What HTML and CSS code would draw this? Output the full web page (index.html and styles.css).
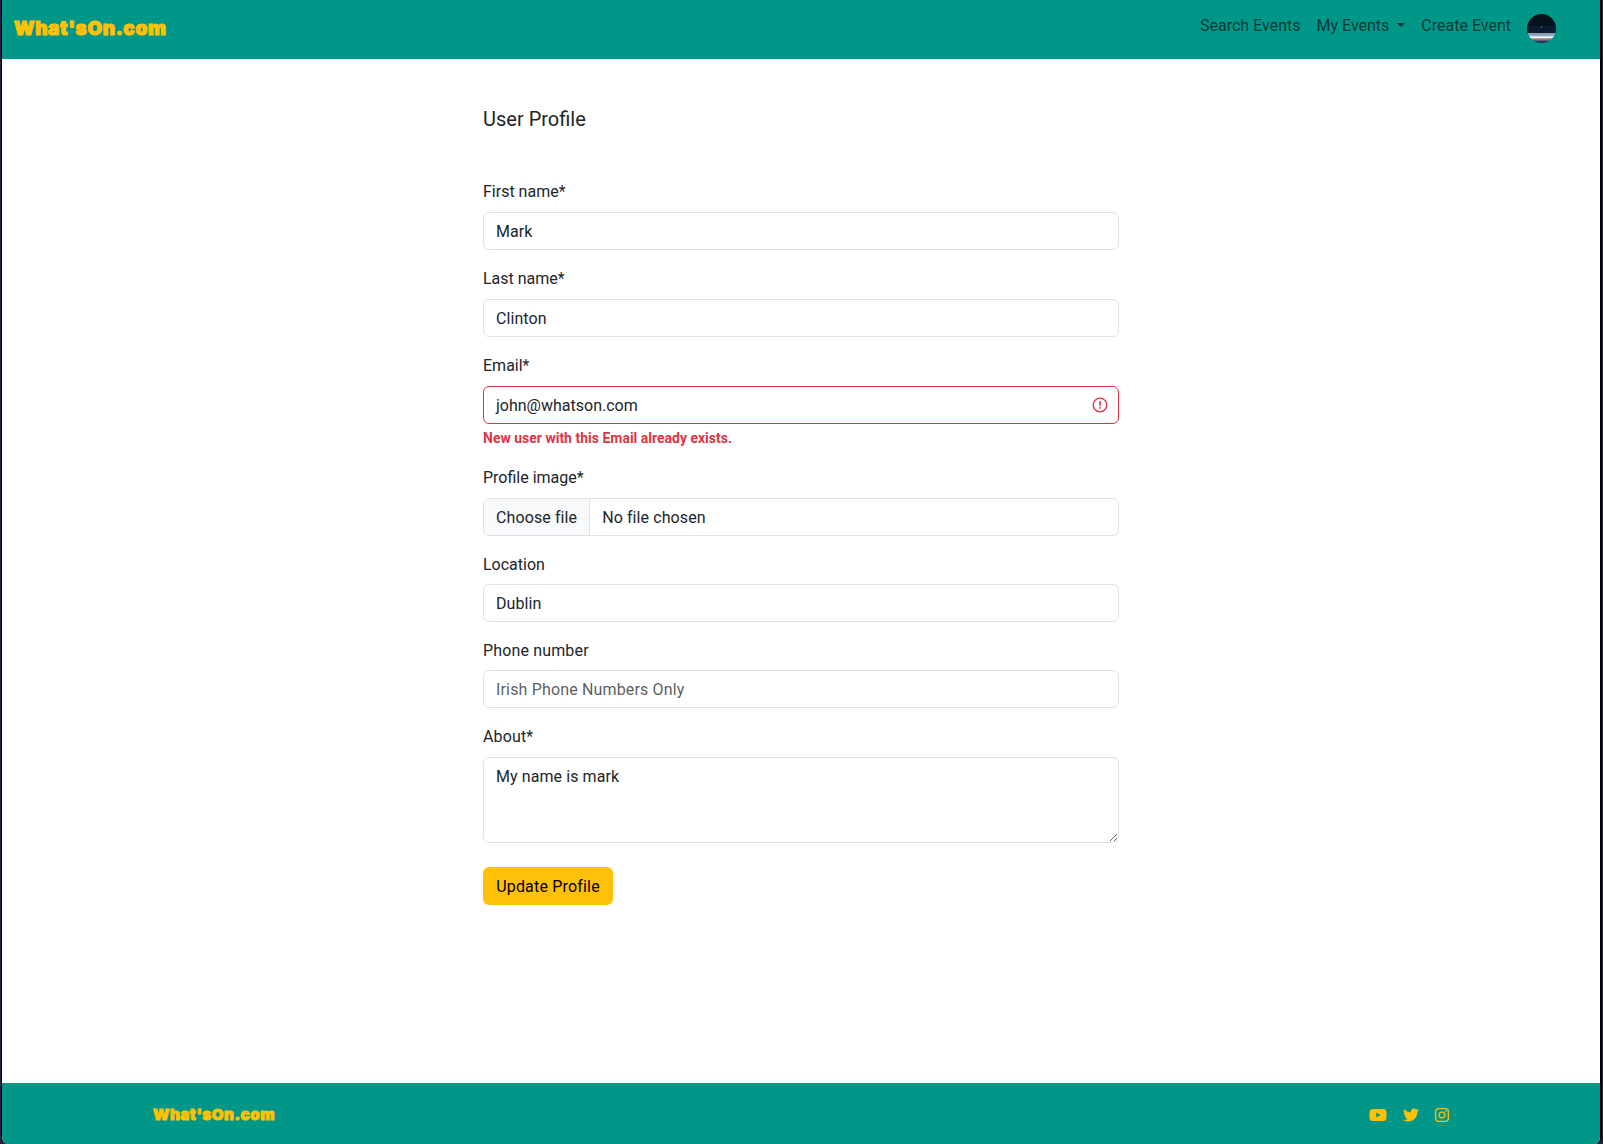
FILE: index.html
```html
<!DOCTYPE html>
<html lang="en">
<head>
<meta charset="utf-8">
<title>What'sOn.com - User Profile</title>
<link rel="stylesheet" href="styles.css">
</head>
<body>
<div class="window">
<header class="navbar">
  <a class="brand">What'sOn.com</a>
  <nav class="nav">
    <a>Search Events</a>
    <a class="dropdown">My Events</a>
    <a>Create Event</a>
    <svg class="avatar" viewBox="0 0 29 29"><defs><clipPath id="round"><circle cx="14.5" cy="14.5" r="14.5"/></clipPath></defs>
      <g clip-path="url(#round)"><path fill="#06131f" d="M0 0h29v20H0z"/><path fill="#0a1c2e" d="M0 12h29v7H0z"/><path fill="#8d9eaf" d="M0 19h29v3H0z"/><path fill="#8cc4ea" d="M0 21.5h29v1.5H0z"/><path fill="#f5fbff" d="M0 22.500h29v2H0z"/><path fill="#f0785c" d="M0 24.5h29v1.3H0z"/><path fill="#55608c" d="M0 25.8h29v1.2H0z"/><path fill="#253352" d="M0 27h29v2H0z"/><path fill="#8d9eaf" d="M14 12.500h.8v1.500h-.8z"/></g></svg>
  </nav>
</header>
<main class="content">
  <h1>User Profile</h1>
  <form class="form">
    <div class="field"><label for="first">First name*</label><input id="first" value="Mark"></div>
    <div class="field"><label for="last">Last name*</label><input id="last" value="Clinton"></div>
    <div class="field email"><label for="email">Email*</label>
      <div class="control invalid"><span>john@whatson.com</span>
        <svg viewBox="0 0 12 12" width="16" height="16" fill="none" stroke="#dc3545"><circle cx="6" cy="6" r="5.1"/><path stroke-linejoin="round" d="M5.800 3.600h.4L6 6.500z"/><circle cx="6" cy="8.200" r=".7" fill="#dc3545" stroke="none"/></svg>
      </div>
      <strong class="error">New user with this Email already exists.</strong></div>
    <div class="field"><label>Profile image*</label><div class="control file"><span class="choose">Choose file</span><span class="chosen">No file chosen</span></div></div>
    <div class="field short"><label for="location">Location</label><input id="location" value="Dublin"></div>
    <div class="field short"><label class="wide" for="phone">Phone number</label><input id="phone" placeholder="Irish Phone Numbers Only"></div>
    <div class="field"><label class="wide" for="about">About*</label><textarea id="about">My name is mark</textarea></div>
    <button type="button">Update Profile</button>
  </form>
</main>
<footer class="footer">
  <a class="brand small">What'sOn.com</a>
  <div class="social">
    <svg width="18" height="16" viewBox="0 0 576 512"><path d="M549.655 124.083c-6.281-23.650-24.787-42.276-48.284-48.597C458.781 64 288 64 288 64S117.220 64 74.629 75.486c-23.497 6.322-42.003 24.947-48.284 48.597-11.412 42.867-11.412 132.305-11.412 132.305s0 89.438 11.412 132.305c6.281 23.650 24.787 41.500 48.284 47.821C117.220 448 288 448 288 448s170.780 0 213.371-11.486c23.497-6.321 42.003-24.171 48.284-47.821 11.412-42.867 11.412-132.305 11.412-132.305s0-89.438-11.412-132.305zm-317.510 213.508V175.185l142.739 81.205-142.739 81.201z"/></svg>
    <svg width="16" height="16" viewBox="0 0 512 512"><path d="M459.370 151.716c.325 4.548.325 9.097.325 13.645 0 138.720-105.583 298.558-298.558 298.558-59.452 0-114.680-17.219-161.137-47.106 8.447.974 16.568 1.299 25.340 1.299 49.055 0 94.213-16.568 130.274-44.832-46.132-.975-84.792-31.188-98.112-72.772 6.498.974 12.995 1.624 19.818 1.624 9.421 0 18.843-1.300 27.614-3.573-48.081-9.747-84.143-51.980-84.143-102.985v-1.299c13.969 7.797 30.214 12.670 47.431 13.319-28.264-18.843-46.781-51.005-46.781-87.391 0-19.492 5.197-37.360 14.294-52.954 51.655 63.675 129.300 105.258 216.365 109.807-1.624-7.797-2.599-15.918-2.599-24.040 0-57.828 46.782-104.934 104.934-104.934 30.213 0 57.502 12.670 76.670 33.137 23.715-4.548 46.456-13.320 66.599-25.340-7.798 24.366-24.366 44.833-46.132 57.827 21.117-2.273 41.584-8.122 60.426-16.243-14.292 20.791-32.161 39.308-52.628 54.253z"/></svg>
    <svg width="16" height="16" viewBox="0 0 16 16"><rect x="1.600" y="1.600" width="12.800" height="12.800" rx="3.300" fill="none" stroke="#ffc107" stroke-width="1.400"/><circle cx="8" cy="8" r="2.950" fill="none" stroke="#ffc107" stroke-width="1.300"/><circle cx="11.700" cy="4.300" r=".85"/></svg>
  </div>
</footer>
</div>
</body>
</html>
```
FILE: styles.css
```css
* { box-sizing: border-box; }
body { margin: 0; height: 1144px; overflow: hidden; background: #27233f; font: 16px/24px Roboto, sans-serif; color: #212529; }
.window { height: 1144px; margin: 0 1px; width: 1601px; border: solid #000; border-width: 0 2px 0 1px; border-radius: 0 0 7px 7px; overflow: hidden; background: #fff; display: flex; flex-direction: column; }
.navbar { height: 59px; flex: none; background: #009688; display: flex; align-items: flex-start; justify-content: space-between; padding: 14px 44px 0 12px; }
.brand { font: 900 19px/30px Inter, sans-serif; color: #ffc107; -webkit-text-stroke: 1.1px #ffc107; letter-spacing: .6px; white-space: nowrap; }
.brand.small { font-size: 15.2px; letter-spacing: .5px; -webkit-text-stroke-width: .9px; }
.nav { display: flex; gap: 16px; color: rgba(0, 0, 0, .65); line-height: 24px; }
.dropdown::after { content: ""; display: inline-block; margin-left: 8px; vertical-align: 4px; border: 4.800px solid transparent; border-top-color: currentColor; border-bottom: 0; }
.avatar { width: 29px; height: 29px; }
.content { flex: 1; width: 636px; margin-left: 481px; padding-top: 48px; }
h1 { margin: 0; font-size: 20px; line-height: 24px; font-weight: 400; }
.form { padding-top: 49px; }
.field { display: flex; flex-direction: column; margin-bottom: 17px; }
label { margin-bottom: 8px; height: 24px; }
.wide { letter-spacing: .15px; }
.short label { margin-bottom: 7px; }
input, textarea, .control { width: 100%; height: 38px; font: inherit; color: inherit; background: #fff; border: 1px solid #dee2e6; border-radius: 6px; padding: 6px 12px; outline: none; letter-spacing: .08px; }
input::placeholder { color: rgba(33, 37, 41, .75); letter-spacing: .16px; }
textarea { height: 86px; padding-top: 7px; resize: vertical; display: block; }
.control { display: flex; align-items: center; justify-content: space-between; }
.invalid { border-color: #dc3545; padding-right: 10px; letter-spacing: 0; }
.invalid span { padding-top: 1px; }
.error { font-size: 14px; line-height: 21px; margin-top: 4px; color: #dc3545; }
.file { justify-content: flex-start; padding: 0; overflow: hidden; letter-spacing: .1px; }
.choose { background: #f8f9fa; border-right: 1px solid #dee2e6; padding: 7px 12px 5px; }
.chosen { padding: 1px 0 0 12px; }
button { display: block; margin-top: 24px; width: 130px; height: 38px; padding: 2px 0 0; font: inherit; letter-spacing: .18px; color: #000; background: #ffc107; border: 0; border-radius: 6px; }
.footer { height: 61px; flex: none; background: #009688; display: flex; align-items: center; justify-content: space-between; padding: 2px 150px 0 151px; }
.social { display: flex; gap: 15.500px; fill: #ffc107; }
```
